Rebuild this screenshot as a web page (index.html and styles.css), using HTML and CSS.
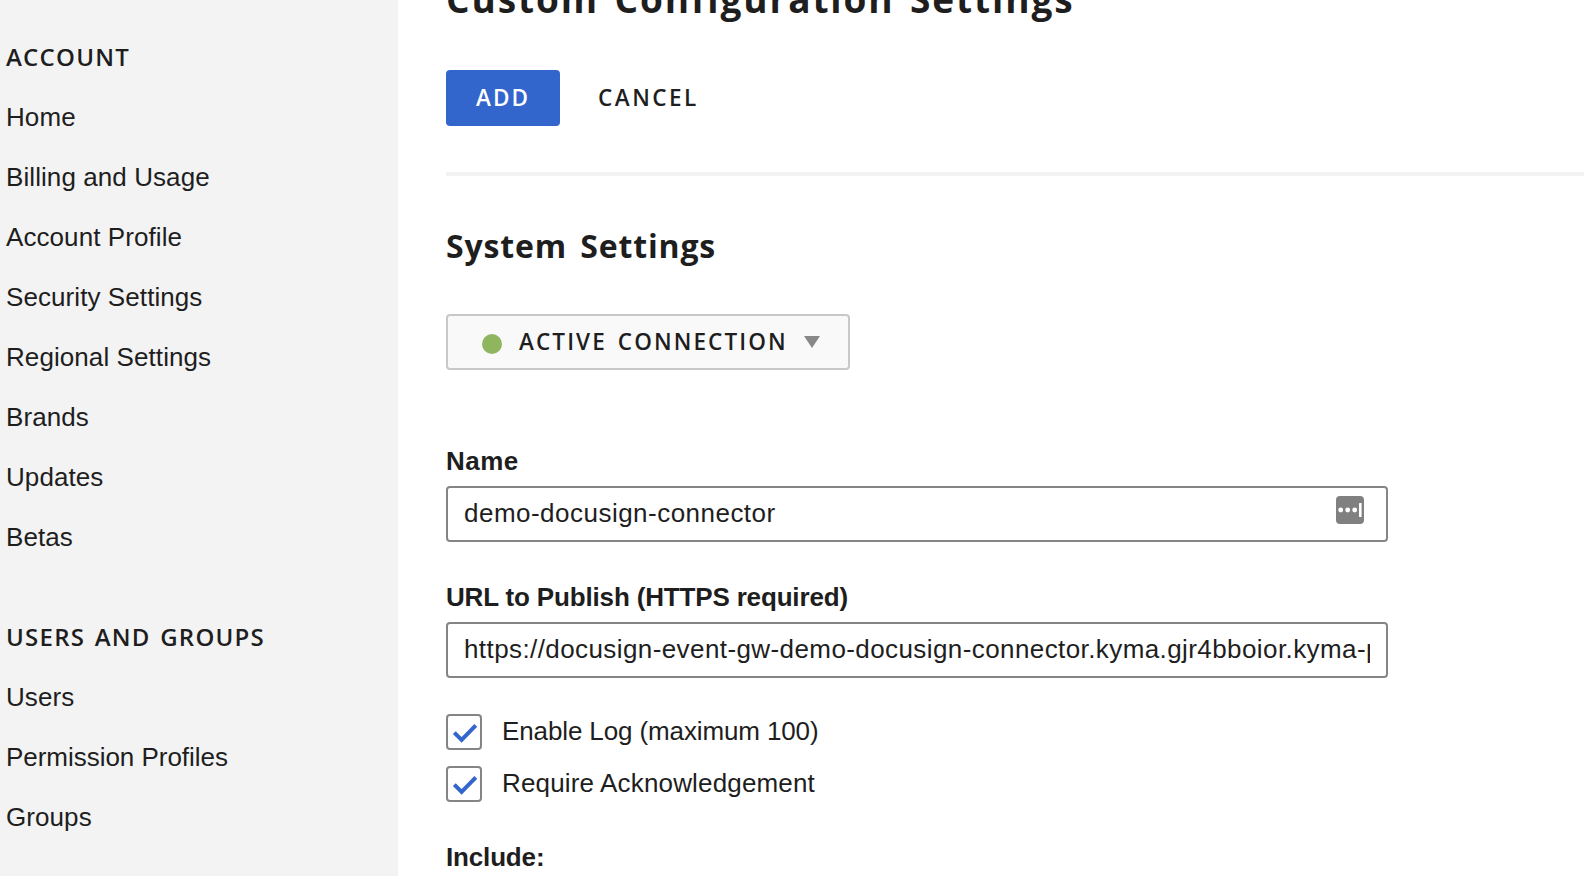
FILE: index.html
```html
<!DOCTYPE html>
<html lang="en">
<head>
<meta charset="utf-8">
<title>Custom Configuration Settings</title>
<link rel="stylesheet" href="styles.css">
</head>
<body>
<div class="app">
  <nav class="sidebar">
    <section class="nav-group">
      <h3 class="nav-title">ACCOUNT</h3>
      <a class="nav-link">Home</a>
      <a class="nav-link">Billing and Usage</a>
      <a class="nav-link">Account Profile</a>
      <a class="nav-link">Security Settings</a>
      <a class="nav-link">Regional Settings</a>
      <a class="nav-link">Brands</a>
      <a class="nav-link">Updates</a>
      <a class="nav-link">Betas</a>
    </section>
    <section class="nav-group">
      <h3 class="nav-title">USERS AND GROUPS</h3>
      <a class="nav-link">Users</a>
      <a class="nav-link nav-link-tight">Permission Profiles</a>
      <a class="nav-link">Groups</a>
    </section>
  </nav>
  <main class="content">
    <h1 class="page-title">Custom Configuration Settings</h1>
    <div class="actions">
      <button class="btn btn-primary">ADD</button>
      <button class="btn btn-text">CANCEL</button>
    </div>
    <h2 class="section-title">System Settings</h2>
    <button class="btn status">
      <span class="status-dot"></span>
      <span class="status-label">ACTIVE CONNECTION</span>
      <svg class="status-caret" width="16" height="12" viewBox="0 0 16 12"><path d="M0 0h16L8 12z" fill="#888"/></svg>
    </button>
    <label class="field-label label-name" for="name">Name</label>
    <div class="field">
      <input class="input" id="name" type="text" value="demo-docusign-connector">
      <svg class="field-icon" width="28" height="28" viewBox="0 0 28 28"><rect width="28" height="28" rx="4" fill="#808080"/><g fill="#fff"><circle cx="4.7" cy="14" r="2.4"/><circle cx="11.7" cy="14" r="2.4"/><circle cx="18.7" cy="14" r="2.4"/><rect x="23" y="7" width="2.6" height="14" rx=".6"/></g></svg>
    </div>
    <label class="field-label" for="url">URL to Publish (HTTPS required)</label>
    <div class="field">
      <input class="input input-url" id="url" type="text" value="https://docusign-event-gw-demo-docusign-connector.kyma.gjr4bboior.kyma-pr">
    </div>
    <div class="checks">
      <div class="check">
        <span class="box"><svg width="32" height="32" viewBox="0 0 32 32"><path d="M6.3 16.6l7.3 7.4L27.8 9.3" fill="none" stroke="#36c" stroke-width="4"/></svg></span>
        <span class="check-label check-log">Enable Log (maximum 100)</span>
      </div>
      <div class="check">
        <span class="box"><svg width="32" height="32" viewBox="0 0 32 32"><path d="M6.3 16.6l7.3 7.4L27.8 9.3" fill="none" stroke="#36c" stroke-width="4"/></svg></span>
        <span class="check-label check-ack">Require Acknowledgement</span>
      </div>
    </div>
    <div class="field-label include">Include:</div>
  </main>
</div>
</body>
</html>
```
FILE: styles.css
```css
* { box-sizing: border-box; }
body {
  margin: 0;
  height: 876px;
  overflow: hidden;
  background: #fff;
  color: #1e1e1e;
  font-family: "Liberation Sans", Arial, sans-serif;
  font-size: 26px;
}
.app { display: flex; height: 876px; overflow: hidden; }
.sidebar {
  flex: none;
  display: flex;
  flex-direction: column;
  gap: 40px;
  width: 398px;
  padding: 27px 0 0 6px;
  background: #f3f3f3;
}
.nav-group { display: flex; flex-direction: column; }
.nav-title {
  margin: 0;
  font: 600 24px/60px "Open Sans", sans-serif;
  letter-spacing: 1.25px;
  word-spacing: 2px;
  white-space: nowrap;
}
.nav-link { line-height: 60px; letter-spacing: 0.08px; white-space: nowrap; }
.nav-link-tight { letter-spacing: -0.03px; }
.content {
  flex: 1;
  min-width: 0;
  display: flex;
  flex-direction: column;
  align-items: flex-start;
  padding-left: 48px;
}
.content > * { flex-shrink: 0; }
.page-title {
  margin: -27px 0 45px;
  font: 700 37px/52px "Open Sans", sans-serif;
  letter-spacing: 1.9px;
  word-spacing: 4px;
  white-space: nowrap;
}
.actions {
  display: flex;
  align-self: stretch;
  gap: 8px;
  height: 106px;
  border-bottom: 4px solid #f3f3f3;
}
.btn {
  height: 56px;
  border: 0;
  border-radius: 4px;
  padding: 0;
  color: #1e1e1e;
  font: 600 22.5px/56px "Open Sans", sans-serif;
  white-space: nowrap;
}
.btn-primary { width: 114px; background: #36c; color: #fff; letter-spacing: 2px; }
.btn-text { padding: 0 0 0 30px; background: transparent; letter-spacing: 2.5px; }
.section-title {
  margin: 46px 0 44px;
  font: 700 32px/48px "Open Sans", sans-serif;
  letter-spacing: 0.85px;
  word-spacing: 4px;
  white-space: nowrap;
}
.status {
  display: flex;
  align-items: center;
  width: 404px;
  padding: 0 28px 0 34px;
  border: 2px solid #c8c8c8;
  background: #f9f9f9;
  line-height: 52px;
}
.status-dot {
  width: 20px;
  height: 20px;
  margin: 4px 17px 0 0;
  border-radius: 50%;
  background: #8fb65f;
}
.status-label { letter-spacing: 2.1px; word-spacing: 3px; }
.status-caret { margin-left: auto; }
.field-label {
  margin-bottom: 7px;
  font-weight: 700;
  line-height: 36px;
  letter-spacing: -0.16px;
  white-space: nowrap;
}
.label-name { letter-spacing: 0.5px; }
.status + .field-label { margin-top: 73px; }
.field + .field-label { margin-top: 37px; }
.field { position: relative; width: 942px; }
.input {
  display: block;
  width: 100%;
  height: 56px;
  padding: 0 16px 2px;
  border: 2px solid #858585;
  border-radius: 4px;
  background: #fff;
  color: #1e1e1e;
  font: inherit;
  letter-spacing: 0.48px;
  outline: none;
}
.input-url { letter-spacing: 0.41px; }
.field-icon { position: absolute; top: 10px; right: 24px; }
.checks { display: flex; flex-direction: column; gap: 16px; margin-top: 36px; }
.check { display: flex; gap: 20px; height: 36px; }
.box {
  width: 36px;
  height: 36px;
  border: 2px solid #858585;
  border-radius: 4px;
}
.box svg { display: block; }
.check-label { line-height: 34px; white-space: nowrap; }
.check-log { letter-spacing: -0.12px; }
.check-ack { letter-spacing: 0.16px; }
.include { margin-top: 37px; }
```
